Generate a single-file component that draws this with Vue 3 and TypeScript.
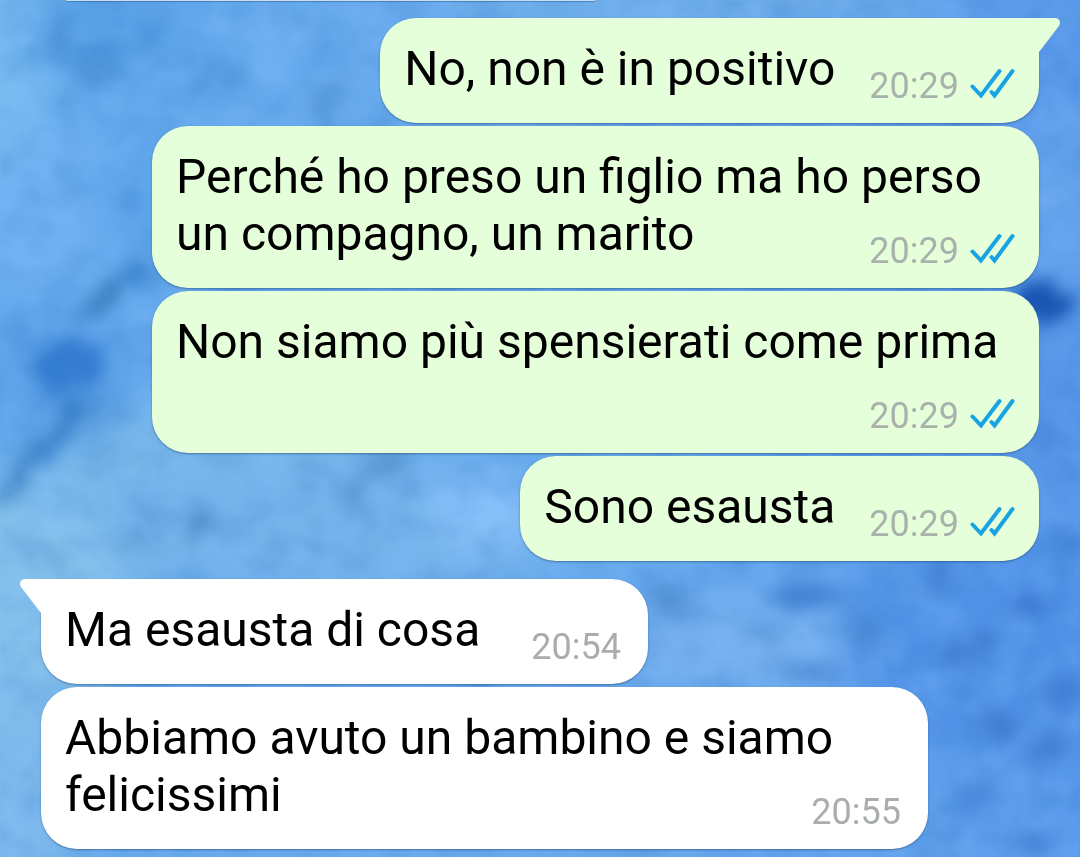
<script setup lang="ts">
interface Message {
  id: number
  text: string
  time: string
  outgoing: boolean
  first: boolean
}

const messages: Message[] = [
  { id: 1, text: 'No, non è in positivo', time: '20:29', outgoing: true, first: true },
  { id: 2, text: 'Perché ho preso un figlio ma ho perso un compagno, un marito', time: '20:29', outgoing: true, first: false },
  { id: 3, text: 'Non siamo più spensierati come prima', time: '20:29', outgoing: true, first: false },
  { id: 4, text: 'Sono esausta', time: '20:29', outgoing: true, first: false },
  { id: 5, text: 'Ma esausta di cosa', time: '20:54', outgoing: false, first: true },
  { id: 6, text: 'Abbiamo avuto un bambino e siamo felicissimi', time: '20:55', outgoing: false, first: false },
]

interface Patch {
  x: number
  y: number
  rx: number
  ry: number
  angle: number
  color: string
  alpha: number
}

const p = (x: number, y: number, rx: number, ry: number, angle: number, color: string, alpha: number): Patch => ({ x, y, rx, ry, angle, color, alpha })

const washes: Patch[] = [
  p(0, 80, 50, 140, 0, '#78bbf1', 1),
  p(120, 30, 90, 50, 0, '#4f98e0', 0.7),
  p(260, 60, 80, 40, 20, '#6eb1f3', 0.6),
  p(200, 220, 110, 60, 40, '#549ce6', 0.6),
  p(30, 220, 60, 70, 0, '#70b1f2', 1),
  p(60, 380, 70, 70, 30, '#5096e0', 0.7),
  p(150, 500, 240, 90, -18, '#78b7e9', 1),
  p(0, 610, 130, 120, 0, '#86c1ec', 1),
  p(330, 530, 230, 70, 0, '#74b2ea', 1),
  p(480, 510, 50, 40, 0, '#8ac2fb', 1),
  p(740, 645, 130, 50, 0, '#76afee', 1),
  p(1000, 640, 160, 120, 0, '#4f90e6', 0.8),
  p(1060, 200, 40, 110, 0, '#66a4ec', 0.8),
  p(700, 4, 260, 24, 0, '#74b1e8', 0.8),
  p(1070, 420, 30, 90, 0, '#5492e6', 0.8),
  p(20, 800, 60, 90, 0, '#80b9ec', 1),
]

const marks: Patch[] = [
  p(72, 366, 38, 26, -10, '#2871ca', 0.75),
  p(54, 438, 54, 10, -48, '#2a72bf', 0.65),
  p(16, 480, 34, 7, -42, '#2b71b8', 0.65),
  p(112, 292, 46, 10, -42, '#286fae', 0.7),
  p(135, 276, 30, 14, 0, '#347fcc', 0.5),
  p(64, 28, 9, 22, 15, '#3678c0', 0.55),
  p(200, 83, 20, 8, -25, '#3076be', 0.6),
  p(224, 70, 24, 14, 0, '#3b88ca', 0.45),
  p(320, 105, 26, 12, -40, '#397fc4', 0.5),
  p(95, 65, 16, 28, 20, '#4186cc', 0.45),
  p(195, 524, 16, 8, -30, '#3c7db5', 0.8),
  p(380, 465, 32, 10, -25, '#4c8cc7', 0.6),
  p(352, 499, 10, 16, 20, '#5594cb', 0.6),
  p(134, 540, 18, 16, 0, '#5899cd', 0.5),
  p(1042, 302, 28, 20, 0, '#1955b3', 1),
  p(1050, 435, 16, 16, 0, '#3e7fd2', 0.6),
  p(800, 596, 34, 15, 0, '#3b7bcf', 0.85),
  p(872, 630, 24, 10, -20, '#3b7bc8', 0.6),
  p(670, 602, 22, 11, 0, '#4584c6', 0.65),
  p(1032, 607, 20, 12, 0, '#3470c9', 0.75),
  p(970, 650, 32, 14, -15, '#3a77cb', 0.7),
  p(942, 572, 16, 10, -40, '#3870c0', 0.7),
  p(810, 672, 28, 10, 0, '#4380cc', 0.55),
  p(997, 725, 16, 14, 0, '#3972c4', 0.7),
  p(1064, 695, 24, 17, 0, '#3e7bd1', 0.7),
  p(1048, 750, 22, 14, -25, '#3b78cc', 0.7),
  p(975, 795, 16, 12, 0, '#3f7ed2', 0.65),
  p(1036, 842, 14, 10, 0, '#346fc4', 0.65),
  p(1070, 545, 16, 12, 0, '#3b79d0', 0.6),
  p(1055, 345, 12, 26, 0, '#649bec', 0.5),
]
</script>

<template>
  <main class="chat">
    <svg class="wallpaper" viewBox="0 0 1080 857" preserveAspectRatio="none" aria-hidden="true">
      <defs>
        <linearGradient id="sky" x1="0" y1="0" x2="1" y2="0">
          <stop offset="0" stop-color="#66abee" />
          <stop offset="0.5" stop-color="#68aaec" />
          <stop offset="1" stop-color="#5898ea" />
        </linearGradient>
        <filter id="wash" x="-20%" y="-20%" width="140%" height="140%" color-interpolation-filters="sRGB">
          <feGaussianBlur stdDeviation="20" />
        </filter>
        <filter id="mark" x="-20%" y="-20%" width="140%" height="140%" color-interpolation-filters="sRGB">
          <feTurbulence type="fractalNoise" baseFrequency="0.05" numOctaves="3" seed="4" result="n" />
          <feDisplacementMap in="SourceGraphic" in2="n" scale="36" xChannelSelector="R" yChannelSelector="G" />
          <feGaussianBlur stdDeviation="8" />
        </filter>
        <filter id="dark" x="0" y="0" width="100%" height="100%" color-interpolation-filters="sRGB">
          <feTurbulence type="fractalNoise" baseFrequency="0.024 0.028" numOctaves="4" seed="11" />
          <feColorMatrix values="0 0 0 0 0.2  0 0 0 0 0.47  0 0 0 0 0.76  2 0 0 0 -0.8" />
          <feGaussianBlur stdDeviation="2" />
        </filter>
        <filter id="light" x="0" y="0" width="100%" height="100%" color-interpolation-filters="sRGB">
          <feTurbulence type="fractalNoise" baseFrequency="0.028 0.024" numOctaves="4" seed="27" />
          <feColorMatrix values="0 0 0 0 0.52  0 0 0 0 0.76  0 0 0 0 1  2 0 0 0 -0.7" />
          <feGaussianBlur stdDeviation="2" />
        </filter>
      </defs>
      <rect width="1080" height="857" fill="url(#sky)" />
      <g filter="url(#wash)">
        <ellipse
          v-for="(s, i) in washes" :key="i" :cx="s.x" :cy="s.y" :rx="s.rx" :ry="s.ry"
          :fill="s.color" :fill-opacity="s.alpha" :transform="`rotate(${s.angle} ${s.x} ${s.y})`"
        />
      </g>
      <rect width="1080" height="857" filter="url(#dark)" opacity="0.28" />
      <rect width="1080" height="857" filter="url(#light)" opacity="0.28" />
      <g filter="url(#mark)">
        <ellipse
          v-for="(s, i) in marks" :key="i" :cx="s.x" :cy="s.y" :rx="s.rx" :ry="s.ry"
          :fill="s.color" :fill-opacity="s.alpha" :transform="`rotate(${s.angle} ${s.x} ${s.y})`"
        />
      </g>
    </svg>

    <div class="previous" aria-hidden="true"></div>

    <ol class="list">
      <li
        v-for="m in messages" :key="m.id" class="bubble"
        :class="{ outgoing: m.outgoing, first: m.first }"
      >
        <svg v-if="m.first" class="tail" viewBox="0 0 22 36" aria-hidden="true">
          <path d="M0 0H17C21.500 0 23.500 4.500 20.600 8.500L1 34H0Z" />
        </svg>
        <span class="text">{{ m.text }}</span>
        <span class="meta">
          <time>{{ m.time }}</time>
          <svg v-if="m.outgoing" class="ticks" viewBox="0 0 46 32" role="img" aria-label="Letto">
            <path d="M3.500 19.500L12 28.500L30.500 4M22.500 25L25.500 28.500L43.500 4" />
          </svg>
        </span>
      </li>
    </ol>
  </main>
</template>

<style>
body {
  margin: 0;
}
</style>

<style scoped>
.chat {
  position: relative;
  box-sizing: border-box;
  min-height: 100vh;
  overflow: hidden;
  background: #62a4ee;
  font-family: Roboto, "Liberation Sans", sans-serif;
}

.wallpaper {
  position: absolute;
  inset: 0;
  width: 100%;
  height: 100%;
}

.previous {
  position: relative;
  width: 49%;
  height: 1px;
  margin-left: 66px;
  background: #c4dcf6;
  box-shadow: 0 1px 1px rgba(30, 60, 100, 0.4);
}

.list {
  position: relative;
  display: flex;
  flex-direction: column;
  align-items: flex-start;
  gap: 3px;
  margin: 0;
  padding: 17px 41px 8px;
  list-style: none;
}

.bubble {
  --fill: #ffffff;
  position: relative;
  display: flow-root;
  box-sizing: border-box;
  max-width: calc(100% - 111px);
  padding: 22px 27px 26px 24px;
  border-radius: 36px;
  background: var(--fill);
  box-shadow: 0 1px 2px rgba(30, 60, 100, 0.5);
  font-size: 48px;
  line-height: 57px;
}

.outgoing {
  --fill: #e6ffdb;
  align-self: flex-end;
  padding-right: 24px;
}

.outgoing.first {
  border-top-right-radius: 0;
}

.bubble.first:not(.outgoing) {
  margin-top: 15px;
  border-top-left-radius: 0;
}

.tail {
  position: absolute;
  top: 0;
  right: 100%;
  width: 22px;
  height: 36px;
  margin-right: -1px;
  overflow: visible;
  fill: var(--fill);
  transform: scaleX(-1);
}

.outgoing .tail {
  right: auto;
  left: 100%;
  margin: 0 0 0 -1px;
  transform: none;
}

.text {
  color: #000000;
}

/* Sits at the end of the last line, or drops below when there is no room. */
.meta {
  float: right;
  display: flex;
  align-items: center;
  gap: 10px;
  height: 22px;
  margin-left: 34px;
  padding-top: 35px;
  color: #a9adaf;
  font-size: 36px;
  line-height: 22px;
}

.bubble:not(.outgoing) .meta {
  margin-left: 51px;
}

.outgoing .meta {
  color: #a9b2aa;
}

.ticks {
  width: 46px;
  height: 32px;
  margin-bottom: 6px;
  fill: none;
  stroke: #18a4e2;
  stroke-width: 4;
  stroke-linecap: round;
}
</style>
